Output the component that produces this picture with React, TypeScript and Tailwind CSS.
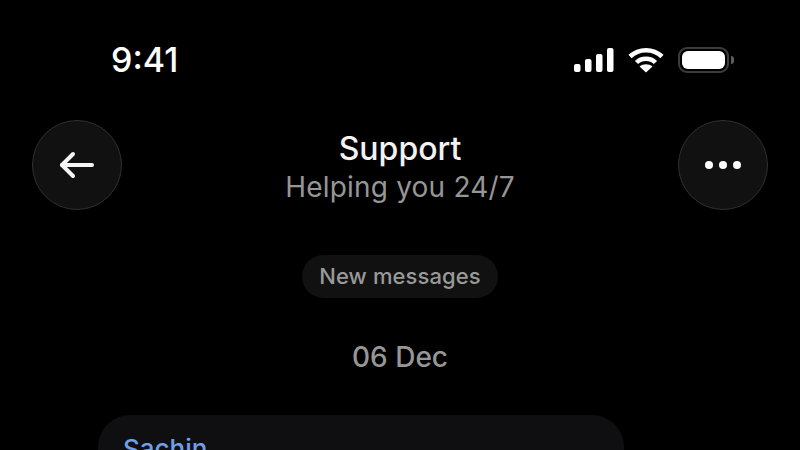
function StatusIcons() {
  return (
    <div className="flex items-center gap-[14px]">
      <svg width="40" height="24" viewBox="0 0 40 24" fill="white">
        <rect x="0" y="16" width="6.5" height="8" rx="2" />
        <rect x="11" y="11" width="6.5" height="13" rx="2" />
        <rect x="22" y="6" width="6.5" height="18" rx="2" />
        <rect x="33" y="0" width="6.5" height="24" rx="2" />
      </svg>
      <svg width="36" height="26" viewBox="0 0 36 26" fill="none" stroke="white">
        <path d="M2 9.5C11 1 25 1 34 9.5" strokeWidth="4.5" />
        <path d="M8.5 15.5C13.5 10.5 22.5 10.5 27.5 15.5" strokeWidth="4.5" />
        <path d="M18 25.5L11.5 19.5C15 16.5 21 16.5 24.5 19.5Z" fill="white" stroke="none" />
      </svg>
      <div className="flex items-center gap-[2px]">
        <div className="w-[51px] h-[26px] rounded-[9px] border-2 border-[#3c3c3c] p-[2px]">
          <div className="w-full h-full rounded-[6px] bg-white" />
        </div>
        <div className="w-[3px] h-[8px] rounded-r-full bg-[#5c5c5c]" />
      </div>
    </div>
  );
}

function RoundButton({ children }: { children: React.ReactNode }) {
  return (
    <button className="flex items-center justify-center w-[90px] h-[90px] rounded-full bg-[#111111] border-[1.5px] border-[#303030]">
      {children}
    </button>
  );
}

export default function App() {
  return (
    <div className="w-[800px] h-[450px] overflow-hidden bg-black font-['Inter',sans-serif]">
      <div className="flex items-center justify-between pl-[111px] pr-[66px] pt-[39px] h-[81px]">
        <span className="text-[34px] leading-[42px] font-[550] text-white">9:41</span>
        <StatusIcons />
      </div>

      <div className="flex items-center justify-between px-[32px] mt-[39px]">
        <RoundButton>
          <svg width="36" height="28" viewBox="0 0 36 28" fill="none" stroke="#f5f5f5" strokeWidth="4" strokeLinecap="round" strokeLinejoin="round">
            <path d="M33 14H3" />
            <path d="M14 3L3 14L14 25" />
          </svg>
        </RoundButton>
        <div className="flex flex-col items-center pt-[4px]">
          <span className="text-[32px] leading-[40px] font-[450] text-[#f2f2f2]">Support</span>
          <span className="text-[28px] leading-[36px] tracking-[0.2px] text-[#969696]">Helping you 24/7</span>
        </div>
        <RoundButton>
          <div className="flex gap-[6px]">
            <div className="w-[8px] h-[8px] rounded-full bg-white" />
            <div className="w-[8px] h-[8px] rounded-full bg-white" />
            <div className="w-[8px] h-[8px] rounded-full bg-white" />
          </div>
        </RoundButton>
      </div>

      <div className="flex flex-col items-center mt-[45px]">
        <div className="flex items-center h-[43px] px-[17px] rounded-full bg-[#111112] text-[22px] font-[450] tracking-[0.1px] text-[#999999]">
          New messages
        </div>
        <span className="mt-[43px] text-[28px] leading-[32px] font-[450] text-[#969696]">06 Dec</span>
      </div>

      <div className="w-[526px] ml-[98px] mt-[42px] h-[200px] rounded-[32px] bg-[#0f0f11] px-[25px] pt-[18px]">
        <span className="text-[26px] leading-[32px] font-[450] text-[#6f9fe8]">Sachin</span>
      </div>
    </div>
  );
}
